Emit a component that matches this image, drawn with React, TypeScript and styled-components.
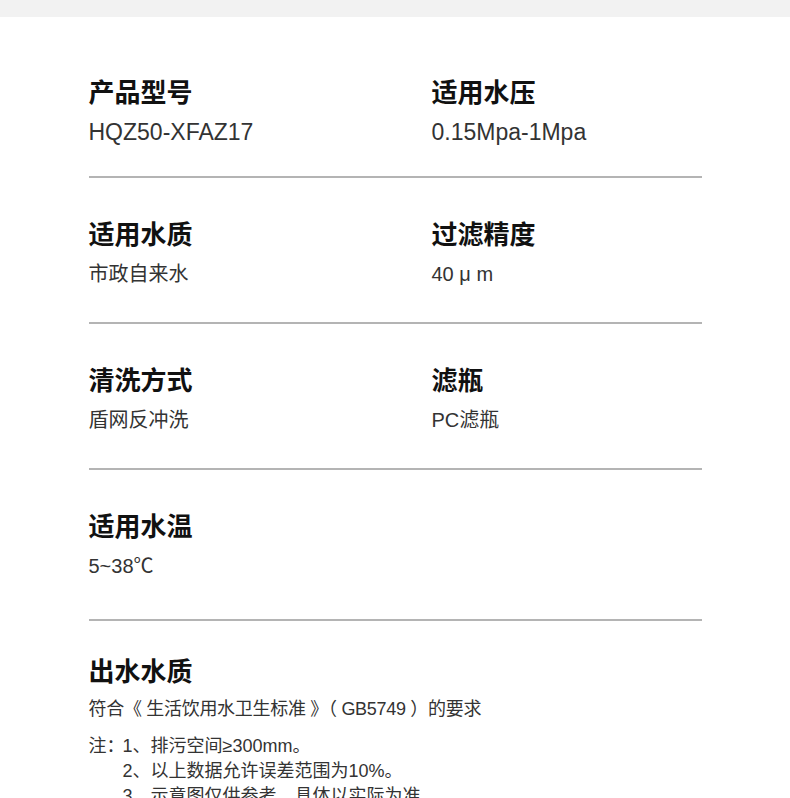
import styled, { createGlobalStyle } from "styled-components"

const GlobalStyle = createGlobalStyle`
    html, body {
        margin: 0;
        padding: 0;
        background: #fff;
    }
    body {
        font-family: "Liberation Sans", "Noto Sans CJK SC", sans-serif;
        color: #333;
    }
`

// latin: the value is plain latin text, drawn a little larger in the design
const specs = [
    [
        { label: "产品型号", value: "HQZ50-XFAZ17", latin: true },
        { label: "适用水压", value: "0.15Mpa-1Mpa", latin: true },
    ],
    [
        { label: "适用水质", value: "市政自来水" },
        { label: "过滤精度", value: "40 μ m" },
    ],
    [
        { label: "清洗方式", value: "盾网反冲洗" },
        { label: "滤瓶", value: "PC滤瓶" },
    ],
    [
        { label: "适用水温", value: "5~38℃" },
    ],
]

const notes = [
    "1、排污空间≥300mm。",
    "2、以上数据允许误差范围为10%。",
    "3、示意图仅供参考，具体以实际为准。",
]

function App() {
    return (
        <>
            <GlobalStyle />
            <Page>
                <TopBand />
                <Content>
                    {specs.map((row, index) => (
                        <SpecRow
                            key={index}
                            $first={index === 0}
                            $last={index === specs.length - 1}
                        >
                            {row.map((spec) => (
                                <SpecItem key={spec.label}>
                                    <Label>{spec.label}</Label>
                                    <Value $latin={spec.latin}>{spec.value}</Value>
                                </SpecItem>
                            ))}
                        </SpecRow>
                    ))}

                    <Quality>
                        <Label>出水水质</Label>
                        <Standard>符合《 生活饮用水卫生标准 》（ GB5749 ）的要求</Standard>
                        <Notes>
                            <span>注：</span>
                            <ul>
                                {notes.map((note) => (
                                    <li key={note}>{note}</li>
                                ))}
                            </ul>
                        </Notes>
                    </Quality>
                </Content>
            </Page>
        </>
    )
}

export default App

const Page = styled.div`
    width: 790px;
    height: 798px;
    overflow: hidden;
    background: #fff;
`

const TopBand = styled.div`
    height: 17px;
    background: #f2f2f2;
`

const Content = styled.div`
    width: 613px;
    margin: 0 auto;
`

const SpecRow = styled.div<{ $first?: boolean; $last?: boolean }>`
    display: grid;
    grid-template-columns: 343px 1fr;
    padding-top: ${(p) => (p.$first ? "58px" : "39px")};
    padding-bottom: ${(p) => (p.$first ? "29px" : p.$last ? "38px" : "33px")};
    border-bottom: 2px solid #b4b4b4;
`

const SpecItem = styled.div`
    display: flex;
    flex-direction: column;
    gap: 10px;
`

const Label = styled.h3`
    margin: 0;
    font-family: "Noto Sans CJK SC", sans-serif;
    font-size: 26px;
    line-height: 32px;
    font-weight: 700;
    color: #111;
`

const Value = styled.p<{ $latin?: boolean }>`
    margin: 0;
    font-size: ${(p) => (p.$latin ? "23px" : "20px")};
    line-height: 30px;
    color: #333;
`

const Quality = styled.div`
    padding-top: 33px;
    display: flex;
    flex-direction: column;

    ${Label} {
        margin-bottom: 11px;
    }
`

const Standard = styled.p`
    margin: 0 0 12px;
    font-size: 18px;
    line-height: 25px;
    letter-spacing: -0.3px;
    color: #333;
`

const Notes = styled.div`
    display: flex;
    font-size: 18px;
    line-height: 25px;
    color: #333;

    span {
        width: 34px;
        flex: none;
    }

    ul {
        list-style: none;
        margin: 0;
        padding: 0;
    }
`
